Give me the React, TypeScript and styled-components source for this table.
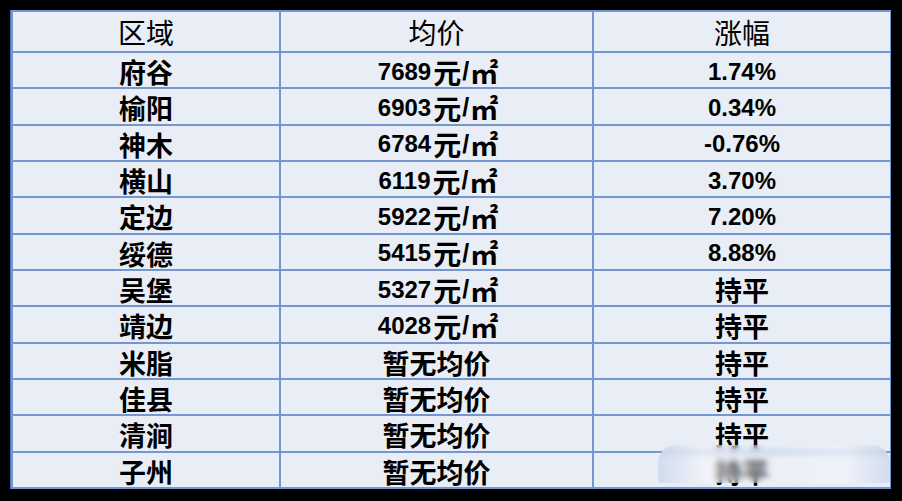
import React from "react";
import styled, { createGlobalStyle } from "styled-components";

const GlobalStyle = createGlobalStyle`
  html, body {
    margin: 0;
    padding: 0;
    background: #000;
  }
  * {
    box-sizing: border-box;
  }
`;

const Page = styled.div`
  width: 902px;
  height: 501px;
  background: #000;
  padding: 10px 0 0 10px;
`;

const Table = styled.div`
  position: relative;
  width: 881px;
  height: 479px;
  display: grid;
  grid-template-columns: 266px 311px 296px;
  grid-template-rows: 39px repeat(12, 1fr);
  gap: 2px;
  padding: 2px;
  background: #7497cf;
  border-left: 1px solid #4f73b0;
`;

const Cell = styled.div<{ $head?: boolean; $num?: boolean }>`
  background: #e9edf5;
  display: flex;
  align-items: center;
  justify-content: center;
  color: #000;
  padding-top: ${(p) => (p.$head ? "0" : "3px")};
  font-family: ${(p) =>
    p.$num
      ? '"Liberation Sans", Arial, sans-serif'
      : '"Noto Sans CJK SC", "Noto Sans", sans-serif'};
  font-weight: ${(p) => (p.$head ? 400 : 700)};
  font-size: ${(p) => (p.$num ? "24px" : p.$head ? "28px" : "27px")};
  line-height: 1;
  white-space: nowrap;
`;

const Cjk = styled.span`
  font-family: "Noto Sans CJK SC", sans-serif;
  font-size: 28px;
  font-weight: 700;
  margin: 0 1px 0 2px;
`;

const Slash = styled.span`
  font-size: 25px;
`;

const Unit = styled.span`
  font-family: "Noto Sans CJK SC", sans-serif;
  font-size: 28px;
  font-weight: 700;
  letter-spacing: -3px;
  margin-left: 1px;
`;

const Watermark = styled.div`
  position: absolute;
  left: 647px;
  top: 435px;
  width: 232px;
  height: 38px;
  border-radius: 18px 18px 4px 4px;
  backdrop-filter: blur(3px);
  background: linear-gradient(
    to right,
    rgba(200, 212, 235, 0.7),
    rgba(246, 248, 252, 0.5) 20%,
    rgba(246, 248, 252, 0.2) 50%,
    rgba(246, 248, 252, 0.5) 80%,
    rgba(200, 212, 235, 0.7)
  );
`;

const rows: [string, string | null, string][] = [
  ["府谷", "7689", "1.74%"],
  ["榆阳", "6903", "0.34%"],
  ["神木", "6784", "-0.76%"],
  ["横山", "6119", "3.70%"],
  ["定边", "5922", "7.20%"],
  ["绥德", "5415", "8.88%"],
  ["吴堡", "5327", "持平"],
  ["靖边", "4028", "持平"],
  ["米脂", null, "持平"],
  ["佳县", null, "持平"],
  ["清涧", null, "持平"],
  ["子州", null, "持平"],
];

export default function App() {
  return (
    <>
      <GlobalStyle />
      <Page>
        <Table>
          <Cell $head>区域</Cell>
          <Cell $head>均价</Cell>
          <Cell $head>涨幅</Cell>
          {rows.map(([area, price, change]) => (
            <React.Fragment key={area}>
              <Cell>{area}</Cell>
              {price ? (
                <Cell $num>
                  {price}
                  <Cjk>元</Cjk>
                  <Slash>/</Slash>
                  <Unit>㎡</Unit>
                </Cell>
              ) : (
                <Cell>暂无均价</Cell>
              )}
              <Cell $num={change !== "持平"}>{change}</Cell>
            </React.Fragment>
          ))}
          <Watermark />
        </Table>
      </Page>
    </>
  );
}
